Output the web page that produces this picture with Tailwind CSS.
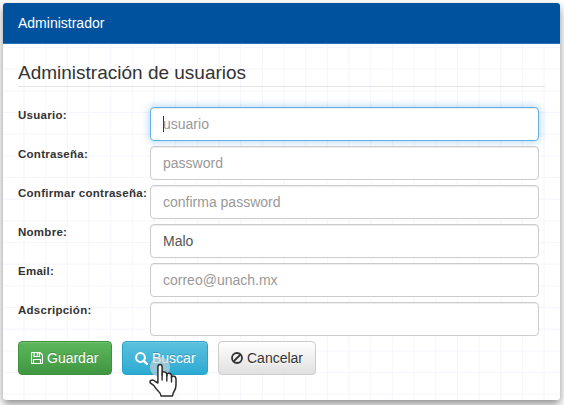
<!DOCTYPE html>
<html lang="es">
<head>
<meta charset="utf-8">
<title>Administración de usuarios</title>
<script src="https://cdn.jsdelivr.net/npm/@tailwindcss/browser@4"></script>
</head>
<body class="relative h-[405px] w-[564px] overflow-hidden bg-white p-[3px] font-['Liberation_Sans',Arial,sans-serif] text-[14px] text-[#333]">
<main class="relative h-[397px] w-[557px] rounded-[3px] bg-white shadow-[0_4px_8px_rgba(0,0,0,0.45)]">
  <svg class="absolute inset-0" width="557" height="397" aria-hidden="true">
    <defs><pattern id="grid" x="20.5" y="44" width="21.67" height="21.67" patternUnits="userSpaceOnUse"><path d="M.5 0V21.67M0 .5H21.67" stroke="#f5f5fd" fill="none"/></pattern></defs>
    <rect width="557" height="397" rx="3" fill="url(#grid)"/>
  </svg>
  <header class="relative flex h-[41px] items-center rounded-t-[3px] border-b border-[#2b70b8] bg-[#00529e] px-[15px] text-white">Administrador</header>
  <form class="relative px-[15px] pt-[16px]">
    <h1 class="mb-5 h-[27px] border-b border-[#e5e5e5] text-[19px] leading-[26px] text-[#333]">Administración de usuarios</h1>
    <div class="grid grid-cols-[132px_389px] gap-y-[5px]">
      <label class="pt-[1px] text-[11.5px] leading-[14px] font-bold tracking-[0.27px] whitespace-nowrap">Usuario:</label>
      <div class="flex h-[34px] items-center rounded-[4px] border border-[#66afe9] bg-white px-3 text-[#999] shadow-[inset_0_1px_1px_rgba(0,0,0,0.075),0_0_8px_rgba(102,175,233,0.6)]"><span class="h-[16px] w-px bg-[#333]"></span><span class="-ml-px">usuario</span></div>
      <label class="pt-[1px] text-[11.5px] leading-[14px] font-bold tracking-[0.27px] whitespace-nowrap">Contraseña:</label>
      <div class="flex h-[34px] items-center rounded-[4px] border border-[#ccc] bg-white px-3 text-[#999] shadow-[inset_0_1px_1px_rgba(0,0,0,0.075)]">password</div>
      <label class="pt-[1px] text-[11.5px] leading-[14px] font-bold tracking-[0.27px] whitespace-nowrap">Confirmar contraseña:</label>
      <div class="flex h-[34px] items-center rounded-[4px] border border-[#ccc] bg-white px-3 text-[#999] shadow-[inset_0_1px_1px_rgba(0,0,0,0.075)]">confirma password</div>
      <label class="pt-[1px] text-[11.5px] leading-[14px] font-bold tracking-[0.27px] whitespace-nowrap">Nombre:</label>
      <div class="flex h-[34px] items-center rounded-[4px] border border-[#ccc] bg-white px-3 text-[#555] shadow-[inset_0_1px_1px_rgba(0,0,0,0.075)]">Malo</div>
      <label class="pt-[1px] text-[11.5px] leading-[14px] font-bold tracking-[0.27px] whitespace-nowrap">Email:</label>
      <div class="flex h-[34px] items-center rounded-[4px] border border-[#ccc] bg-white px-3 text-[#999] shadow-[inset_0_1px_1px_rgba(0,0,0,0.075)]">correo@unach.mx</div>
      <label class="pt-[1px] text-[11.5px] leading-[14px] font-bold tracking-[0.27px] whitespace-nowrap">Adscripción:</label>
      <div class="h-[34px] rounded-[4px] border border-[#ccc] bg-white shadow-[inset_0_1px_1px_rgba(0,0,0,0.075)]"></div>
    </div>
    <div class="mt-[5px] flex gap-[10px]">
      <button type="button" class="flex h-[34px] w-[94px] items-center gap-1 rounded-[4px] border border-[#3e8f3e] bg-linear-to-b from-[#5cb85c] to-[#419641] px-3 text-white shadow-[inset_0_1px_0_rgba(255,255,255,0.15)] [text-shadow:0_-1px_0_rgba(0,0,0,0.2)]">
        <svg class="h-3 w-3 shrink-0" viewBox="0 0 12 12" fill="none" stroke="#fff" stroke-width="1.15"><path d="M1 .5H9L11.5 3V11Q11.5 11.5 11 11.5H1Q.5 11.5 .5 11V1Q.5.5 1 .5Z"/><path d="M3 .5V4.5H8.5V.5M2.5 11.5V7.5H9.5V11.5"/><path d="M6.5 1V3.5" stroke-width="1.5"/></svg>Guardar</button>
      <button type="button" class="flex h-[34px] w-[86px] items-center gap-1 rounded-[4px] border border-[#28a4c9] bg-linear-to-b from-[#5bc0de] to-[#2aabd2] px-3 text-white shadow-[inset_0_1px_0_rgba(255,255,255,0.15)] [text-shadow:0_-1px_0_rgba(0,0,0,0.2)]">
        <svg class="h-[13px] w-[13px] shrink-0" viewBox="0 0 13 13" fill="none" stroke="#fff" stroke-width="2"><circle cx="5.5" cy="5.5" r="4.4"/><path d="M8.8 8.8L12 12" stroke-width="2.4" stroke-linecap="round"/></svg>Buscar</button>
      <button type="button" class="flex h-[34px] w-[98px] items-center gap-1 rounded-[4px] border border-[#ccc] bg-linear-to-b from-white to-[#e0e0e0] px-3 text-[#333] [text-shadow:0_1px_0_#fff]">
        <svg class="h-3 w-3 shrink-0" viewBox="0 0 12 12" fill="none" stroke="#333" stroke-width="1.8"><circle cx="6" cy="6" r="5"/><path d="M2.5 9.5L9.5 2.5"/></svg>Cancelar</button>
    </div>
  </form>
</main>
<svg class="absolute top-[355px] left-[148px] h-[44px] w-[31px]" viewBox="148 355 31 44" fill="none" aria-hidden="true">
  <circle cx="160" cy="367" r="10" fill="#ddd" fill-opacity=".5"/>
  <g stroke="#b9c9cf" stroke-opacity=".6"><circle cx="160" cy="367" r="9.5"/><circle cx="160" cy="367" r="7.5"/><circle cx="160" cy="367" r="5.5"/><circle cx="160" cy="367" r="3.5"/></g>
  <path d="M157.9 383V367Q158 364.6 160 364.6Q162 364.6 162.1 367V375V373.5Q162.6 371.6 164.4 371.9Q166.5 372 166.8 374V376V375Q167.3 373 169 373.2Q171.3 373.4 171.5 375.4V377.5Q171.9 375.8 173.4 376Q175.8 376.2 176 379V385Q176 388.5 174 391.5Q172.8 393.5 172.5 396H161Q160.8 393.3 158.2 391Q155.8 388.5 153.7 385.3L150.2 382.8Q149.6 380.8 151.4 380.2Q153.3 379.5 155.3 381.5Z" fill="#fff" stroke="#2d2d2d" stroke-width="1.5" stroke-linejoin="round"/>
  <path d="M162.1 374V380M166.8 375V381M171.5 377V382" stroke="#2d2d2d" stroke-width="1.4" stroke-linecap="round"/>
</svg>
</body>
</html>
